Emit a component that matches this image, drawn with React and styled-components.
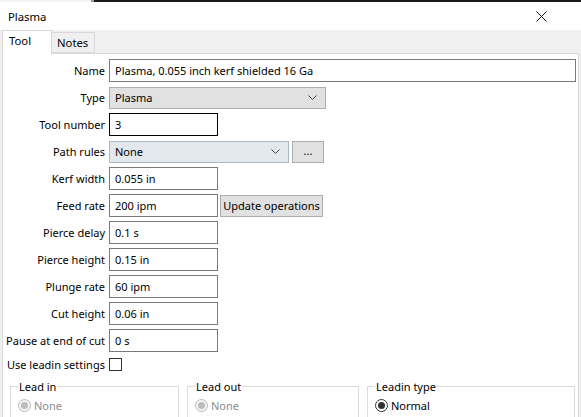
import React from "react";
import styled, { createGlobalStyle } from "styled-components";

const Global = createGlobalStyle`
  html, body { margin: 0; padding: 0; background: #f0f0f0; overflow: hidden; }
  body { font-family: "Noto Sans", "Open Sans", sans-serif; font-size: 11px; color: #000; }
  * { box-sizing: border-box; }
`;

const Window = styled.div`
  width: 581px;
  height: 417px;
  display: flex;
  flex-direction: column;
  background: #f0f0f0;
  overflow: hidden;
`;

const TopStrip = styled.div`
  height: 2px;
  flex: none;
  background: linear-gradient(to right, #f4f4f4 0 91px, #9a9a9a 91px 94px, #1a1a1a 94px);
`;

const TitleBar = styled.div`
  height: 28px;
  flex: none;
  background: #fff;
  display: flex;
  align-items: center;
  justify-content: space-between;
  padding: 0 34px 0 8px;
`;

const TitleText = styled.span`
  font-size: 11.3px;
`;

const Body = styled.div`
  flex: 1;
  display: flex;
  flex-direction: column;
  padding: 0 2px 0 2px;
`;

const TabStrip = styled.div`
  height: 24px;
  flex: none;
  display: flex;
  align-items: flex-end;
  position: relative;
  z-index: 1;
  margin-bottom: -1px;
`;

const Tab = styled.div`
  display: flex;
  align-items: center;
  border: 1px solid #d9d9d9;
  border-bottom: ${(p) => (p.$active ? "none" : "1px solid #d9d9d9")};
  background: ${(p) => (p.$active ? "#fff" : "#f0f0f0")};
  height: ${(p) => (p.$active ? "24px" : "21px")};
  padding: ${(p) => (p.$active ? "0 0 4px 6px" : "0 0 1px 5px")};
  width: ${(p) => (p.$active ? "50px" : "44px")};
  margin-left: ${(p) => (p.$active ? "0" : "-1px")};
  margin-bottom: ${(p) => (p.$active ? "0" : "1px")};
  font-size: 11.3px;
`;

const Panel = styled.div`
  flex: 1;
  background: #fff;
  border: 1px solid #d9d9d9;
  border-bottom: none;
  padding: 5px 0 0 0;
  display: flex;
  flex-direction: column;
`;

const Form = styled.div`
  display: grid;
  grid-template-columns: 102px auto;
  column-gap: 4px;
  row-gap: 4px;
  align-items: center;
`;

const Label = styled.label`
  text-align: right;
  white-space: nowrap;
`;

const Cell = styled.div`
  display: flex;
  align-items: center;
  gap: ${(p) => p.$gap ?? 2}px;
  height: 23px;
`;

const TextBox = styled.div`
  width: ${(p) => p.$w}px;
  height: 23px;
  border: 1px solid ${(p) => (p.$focus ? "#000" : "#7a7a7a")};
  background: #fff;
  padding: 0 5px;
  display: flex;
  align-items: center;
  white-space: nowrap;
`;

const Combo = styled.div`
  width: ${(p) => p.$w}px;
  height: 22px;
  border: 1px solid ${(p) => (p.$hover ? "#a6b8c8" : "#adadad")};
  background: ${(p) => (p.$hover ? "#e3e8ed" : "#e1e1e1")};
  padding: 0 8px 0 5px;
  display: flex;
  align-items: center;
  justify-content: space-between;
`;

const Button = styled.div`
  width: ${(p) => p.$w}px;
  height: 22px;
  border: 1px solid #adadad;
  background: #e1e1e1;
  display: flex;
  align-items: center;
  justify-content: center;
  white-space: nowrap;
  padding-bottom: ${(p) => (p.$dots ? "3px" : "0")};
`;

const CheckRow = styled.div`
  display: flex;
  align-items: center;
  gap: 4px;
  margin-top: 5px;
  padding-left: 4px;
`;

const CheckBox = styled.div`
  width: 13px;
  height: 13px;
  border: 1px solid #333;
  background: #fff;
`;

const Groups = styled.div`
  display: flex;
  margin-top: 7px;
  padding-left: 7px;
  gap: 8px;
`;

const Group = styled.fieldset`
  margin: 0;
  width: ${(p) => p.$w}px;
  height: 60px;
  border: 1px solid #dcdcdc;
  border-radius: 0;
  padding: 4px 7px 0;
  flex: none;
`;

const Legend = styled.legend`
  padding: 0 1px;
  margin-left: 0;
  color: #000;
`;

const RadioRow = styled.div`
  display: flex;
  align-items: center;
  gap: 3px;
  color: ${(p) => (p.$disabled ? "#8d8d8d" : "#000")};
`;

const RadioCircle = styled.div`
  width: 13px;
  height: 13px;
  border-radius: 50%;
  border: 1px solid ${(p) => (p.$disabled ? "#bcbcbc" : "#333")};
  background: ${(p) => (p.$disabled ? "#f4f4f4" : "#fff")};
  display: flex;
  align-items: center;
  justify-content: center;
  &::after {
    content: "";
    width: 7px;
    height: 7px;
    border-radius: 50%;
    background: ${(p) => (p.$disabled ? "#bcbcbc" : "#333")};
  }
`;

const Chevron = () => (
  <svg width="9" height="5" viewBox="0 0 9 5">
    <path d="M0.5 0.5 L4.5 4.5 L8.5 0.5" fill="none" stroke="#444" strokeWidth="1" />
  </svg>
);

const CloseIcon = () => (
  <svg width="11" height="11" viewBox="0 0 11 11">
    <path d="M0.5 0.5 L10.5 10.5 M10.5 0.5 L0.5 10.5" stroke="#111" strokeWidth="1" />
  </svg>
);

const Radio = ({ label, disabled }) => (
  <RadioRow $disabled={disabled}>
    <RadioCircle $disabled={disabled} />
    <span>{label}</span>
  </RadioRow>
);

const fields = [
  ["Kerf width", "0.055 in"],
  ["Feed rate", "200 ipm", true],
  ["Pierce delay", "0.1 s"],
  ["Pierce height", "0.15 in"],
  ["Plunge rate", "60 ipm"],
  ["Cut height", "0.06 in"],
  ["Pause at end of cut", "0 s"],
];

export default function App() {
  return (
    <Window>
      <Global />
      <TopStrip />
      <TitleBar>
        <TitleText>Plasma</TitleText>
        <CloseIcon />
      </TitleBar>
      <Body>
        <TabStrip>
          <Tab $active>Tool</Tab>
          <Tab>Notes</Tab>
        </TabStrip>
        <Panel>
          <Form>
            <Label>Name</Label>
            <Cell>
              <TextBox $w={467}>Plasma, 0.055 inch kerf shielded 16 Ga</TextBox>
            </Cell>
            <Label>Type</Label>
            <Cell>
              <Combo $w={217}>
                <span>Plasma</span>
                <Chevron />
              </Combo>
            </Cell>
            <Label>Tool number</Label>
            <Cell>
              <TextBox $w={109} $focus>3</TextBox>
            </Cell>
            <Label>Path rules</Label>
            <Cell $gap={3}>
              <Combo $w={180} $hover>
                <span>None</span>
                <Chevron />
              </Combo>
              <Button $w={32} $dots>...</Button>
            </Cell>
            {fields.map(([l, v, btn]) => (
              <React.Fragment key={l}>
                <Label>{l}</Label>
                <Cell>
                  <TextBox $w={109}>{v}</TextBox>
                  {btn && <Button $w={103}>Update operations</Button>}
                </Cell>
              </React.Fragment>
            ))}
          </Form>
          <CheckRow>
            <span>Use leadin settings</span>
            <CheckBox />
          </CheckRow>
          <Groups>
            <Group $w={169}>
              <Legend>Lead in</Legend>
              <Radio label="None" disabled />
            </Group>
            <Group $w={172}>
              <Legend>Lead out</Legend>
              <Radio label="None" disabled />
            </Group>
            <Group $w={208}>
              <Legend>Leadin type</Legend>
              <Radio label="Normal" />
            </Group>
          </Groups>
        </Panel>
      </Body>
    </Window>
  );
}
